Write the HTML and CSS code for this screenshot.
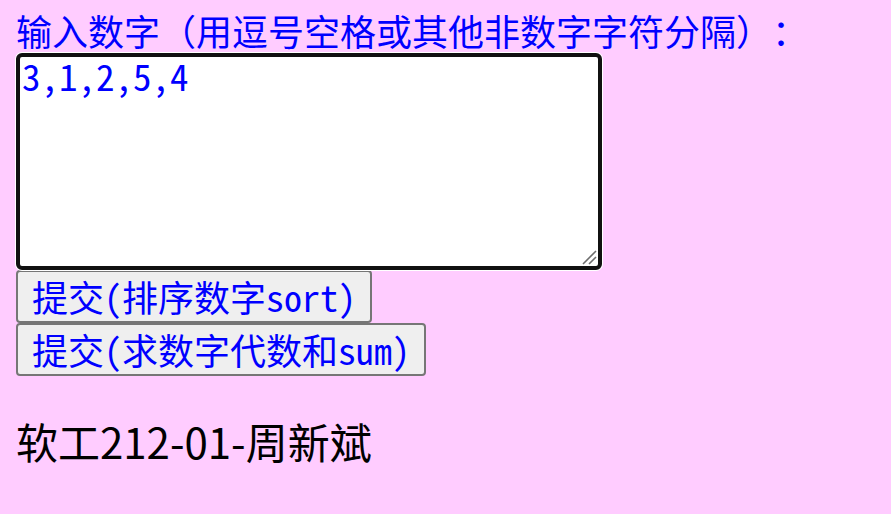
FILE: index.html
```html
<!DOCTYPE html>
<html lang="zh">
<head>
<meta charset="utf-8">
<title>数字排序</title>
<link rel="stylesheet" href="styles.css">
</head>
<body>
<form class="form">
  <label class="label" for="nums">输入数字（用逗号空格或其他非数字字符分隔）：</label>
  <div class="field">
    <textarea id="nums" class="input">3,1,2,5,4</textarea>
    <svg class="grip" width="15" height="15" viewBox="0 0 15 15" aria-hidden="true">
      <path d="M1 14 L14 1 M7 14 L14 7" stroke="#6e6e6e" stroke-width="1.6" fill="none"/>
    </svg>
  </div>
  <button type="button" class="btn">提交(排序数字sort)</button>
  <button type="button" class="btn">提交(求数字代数和sum)</button>
</form>
<p class="author">软工212-01-周新斌</p>
</body>
</html>
```
FILE: styles.css
```css
html, body {
  margin: 0;
  background: #ffccff;
}
body {
  padding: 13px 0 0 16px;
  font-family: "Noto Sans Mono CJK SC", "Liberation Serif", "Noto Sans CJK SC", serif;
  font-size: 36px;
  color: #0000ff;
  text-spacing-trim: space-all;
}
.form {
  display: flex;
  flex-direction: column;
  align-items: flex-start;
}
.label {
  display: block;
  line-height: 34px;
  height: 40px;
  white-space: nowrap;
  font-family: "Noto Sans CJK SC", serif;
}
.field {
  position: relative;
  width: 586px;
  height: 217px;
}
.input {
  display: block;
  box-sizing: border-box;
  width: 586px;
  height: 217px;
  margin: 0;
  padding: 0 2px;
  border: 4px solid #111;
  border-radius: 6px;
  box-shadow: 0 0 0 1px #fff;
  outline: none;
  background: #fff;
  color: #0000ff;
  font-family: "Noto Sans Mono CJK SC", "Liberation Serif", serif;
  font-size: 37px;
  line-height: 37px;
  resize: none;
}
.grip {
  position: absolute;
  right: 5px;
  bottom: 5px;
}
.btn {
  box-sizing: border-box;
  height: 53px;
  margin: 0;
  padding: 0 14px;
  background: #efefef;
  border: 2px solid #767676;
  border-radius: 4px;
  color: #0000ff;
  font-family: "Noto Sans Mono CJK SC", "Liberation Serif", "Noto Sans CJK SC", serif;
  font-size: 36px;
  line-height: 49px;
  white-space: nowrap;
}
.author {
  margin: 38px 0 0;
  font-family: "Noto Sans CJK SC", sans-serif;
  font-size: 42px;
  line-height: 54px;
  color: #000;
}
```
